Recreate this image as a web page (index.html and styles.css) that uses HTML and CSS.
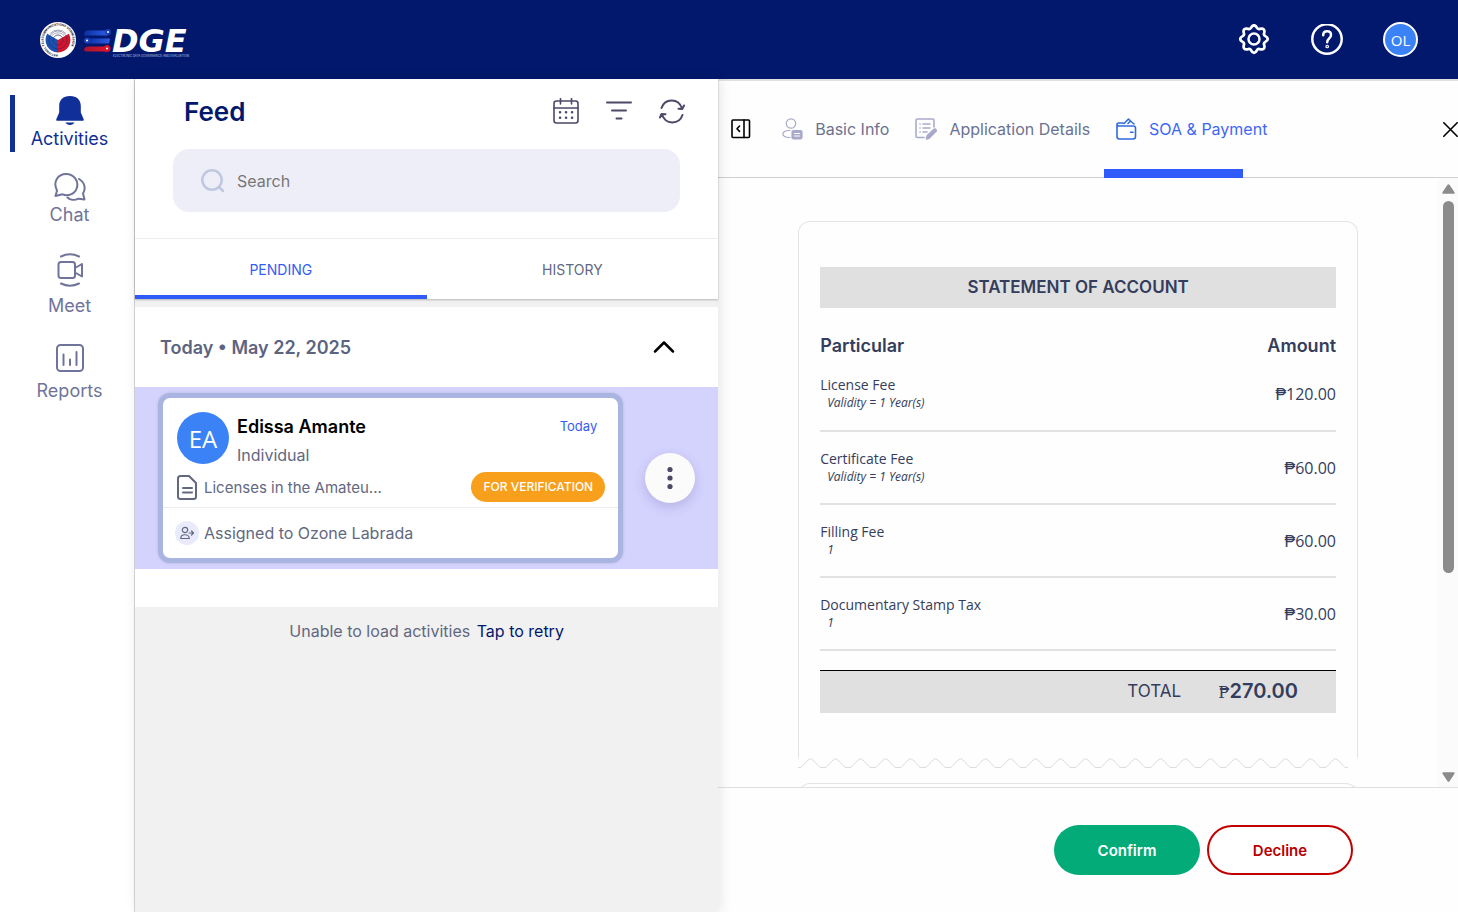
FILE: index.html
```html
<!DOCTYPE html>
<html lang="en">
<head>
<meta charset="utf-8">
<meta name="viewport" content="width=device-width, initial-scale=1">
<title>EDGE – Activities</title>
<link rel="stylesheet" href="styles.css">
</head>
<body>
<div class="app">
  <header class="topbar">
    <a class="brand" href="#" aria-label="EDGE home">
      <svg class="seal" viewBox="0 0 36 36" width="36" height="36" aria-hidden="true">
        <defs><path id="ring" d="M18 32.500a14.500 14.500 0 1 1 .1 0"/></defs>
        <circle cx="18" cy="18" r="18" fill="#fff"/>
        <path d="M18 18 7.200 11.800A12.500 12.500 0 0 0 18 30.500z" fill="#1c4fae"/>
        <path d="M18 18l10.800-6.200A12.500 12.500 0 0 1 18 30.500z" fill="#d5142c"/>
        <g fill="none" stroke="#555c78" stroke-width=".5"><path d="M14 15a5 5 0 0 1 8 0M12 13.500a8 8 0 0 1 12 0M10 11.500a11 11 0 0 1 16 0"/></g>
        <g fill="none" stroke="#14245e" stroke-width=".4"><circle cx="18" cy="18" r="5"/><circle cx="18" cy="18" r="9"/></g>
        <text class="seal-text"><textPath href="#ring">NATIONAL TELECOMMUNICATIONS COMMISSION</textPath></text>
      </svg>
      <svg class="wordmark" viewBox="0 0 118 36" width="118" height="36" aria-hidden="true">
        <defs>
          <linearGradient id="blue"><stop offset="0" stop-color="#0c2fa0"/><stop offset="1" stop-color="#2c5de5"/></linearGradient>
          <linearGradient id="red"><stop offset="0" stop-color="#a31435"/><stop offset="1" stop-color="#e0142b"/></linearGradient>
        </defs>
        <path d="M5 8.500h20v5H1q0-5 4-5z" fill="url(#blue)"/><circle cx="25" cy="10" r="3" fill="#1b3fb8"/>
        <path d="M4 16.500h23l-1 5H4z" fill="url(#blue)"/><circle cx="4" cy="18.500" r="3" fill="#1b3fb8"/>
        <path d="M4 24.500h20v5H4q-3 0-3-2t3-3z" fill="url(#red)"/><circle cx="24" cy="26.500" r="3.500" fill="#d5142c"/>
        <g fill="#fff"><circle cx="25" cy="10" r="1"/><circle cx="4" cy="18.500" r="1"/><circle cx="24" cy="26.500" r="1"/></g>
        <text class="word" x="29" y="30">DGE</text>
        <text class="tagline" x="30" y="35">ELECTRONIC DATA GOVERNANCE AND EVALUATION</text>
      </svg>
    </a>
    <div class="top-actions">
      <button class="plain" aria-label="Settings">
        <svg viewBox="0 0 32 32" width="32" height="32" class="line w25"><path d="M16 2.500c1.500 0 2 1 2.600 2.200.6 1.100 1.500 1.500 2.700 1.100 1.300-.4 2.600-.6 3.500.4s.8 2.200.4 3.500c-.4 1.200 0 2.100 1.100 2.700 1.200.6 2.200 1.100 2.200 2.600s-1 2-2.200 2.600c-1.100.6-1.500 1.500-1.100 2.700.4 1.300.6 2.600-.4 3.500s-2.200.8-3.500.4c-1.200-.4-2.100 0-2.700 1.100C18 26.500 17.500 27.500 16 27.500s-2-1-2.600-2.200c-.6-1.100-1.500-1.500-2.700-1.100-1.300.4-2.600.6-3.500-.4s-.8-2.200-.4-3.500c.4-1.200 0-2.100-1.100-2.700C4.500 17 3.500 16.500 3.500 15s1-2 2.200-2.600c1.100-.6 1.500-1.500 1.100-2.700-.4-1.300-.6-2.600.4-3.500s2.200-.8 3.500-.4c1.200.4 2.100 0 2.700-1.100C14 3.500 14.500 2.500 16 2.500z" transform="translate(-2.600 -1.500) scale(1.100)"/><circle cx="15" cy="15" r="5.500"/></svg>
      </button>
      <button class="plain" aria-label="Help">
        <svg viewBox="0 0 32 32" width="32" height="32" class="line w25"><circle cx="16" cy="15" r="14.700"/><path d="M12.200 11.300c0-2.500 1.700-4 3.900-4s3.900 1.400 3.900 3.700c0 3.400-3.800 3.400-3.800 7.300"/><circle cx="16.200" cy="22.500" r=".6"/></svg>
      </button>
      <button class="avatar small">OL</button>
    </div>
  </header>

  <nav class="sidebar" aria-label="Main">
    <a class="nav-item active" href="#">
      <svg viewBox="0 0 28 30" width="28" height="30"><path d="M14 1C7 1 3.200 5 3.200 11v6.500L.3 24.200C0 25 .4 25.800 1.300 25.800h25.400c.9 0 1.300-.8 1-1.600l-2.900-6.700V11C24.800 5 21 1 14 1zM9.500 27.500h9c-.8 1.600-2.400 2.500-4.500 2.500s-3.700-.9-4.500-2.500z" fill="currentColor"/></svg>
      <span>Activities</span>
    </a>
    <a class="nav-item" href="#">
      <svg viewBox="0 0 32 28" width="32" height="28" class="line w2"><path d="M1.500 23l1.500-5.500C-1.500 9 4 1 12 1s13 7 10.800 14c-2 6.500-9 8.500-14.300 6.300z"/><path d="M25 6c6 3.500 7 9.500 4 14.500l1.500 6-6-.8c-4 2-8.500 1.300-11-1.200"/></svg>
      <span>Chat</span>
    </a>
    <a class="nav-item spaced" href="#">
      <svg viewBox="0 0 26 34" width="26" height="34" class="line w2"><path d="M4 3.500q9-4.500 18 0M4 30.500q9 4.500 18 0"/><rect x="1.500" y="9" width="16.500" height="16" rx="2.500"/><path d="M18 15l7-4v12.500l-7-4z"/></svg>
      <span>Meet</span>
    </a>
    <a class="nav-item spaced" href="#">
      <svg viewBox="0 0 28 28" width="28" height="28" class="line w2"><rect x="1" y="1" width="26" height="26" rx="3.500"/><path d="M7.500 10.500v10.500M14 15.500v5.500M20.500 8v13"/></svg>
      <span>Reports</span>
    </a>
  </nav>

  <main class="feed">
    <section class="feed-head">
      <div class="title-row">
        <h1>Feed</h1>
        <div class="tools">
          <button class="plain" aria-label="Calendar"><svg viewBox="0 0 26 26" width="26" height="26" class="line w15"><rect x="1" y="3" width="24" height="22" rx="2.500"/><path d="M1 10h24M7.500 0v6M18.500 0v6"/><path d="M7 14.300h.1M13 14.300h.1M19 14.300h.1M7 19.800h.1M13 19.800h.1M19 19.800h.1" stroke-width="2.500"/></svg></button>
          <button class="plain" aria-label="Filter"><svg viewBox="0 0 26 26" width="26" height="26" class="line w2"><path d="M1 4.500h24M6 12.500h14M10.500 20.500h5"/></svg></button>
          <button class="plain" aria-label="Refresh"><svg viewBox="0 0 26 26" width="26" height="26" class="line w2"><path d="M2.500 10C6 0 19.500 0 23 10.500M19.500 10.700l3.700.3L25 7.500M23.500 17C20 27 6.500 27 3 16.500M1 19.500L2.500 16l4 .3"/></svg></button>
        </div>
      </div>
      <label class="search">
        <svg viewBox="0 0 24 24" width="24" height="24" class="line w25"><circle cx="11" cy="11" r="9.700"/><path d="M18 18l4 4"/></svg>
        <input type="search" placeholder="Search" aria-label="Search">
      </label>
      <div class="feed-tabs" role="tablist">
        <button role="tab" aria-selected="true">PENDING</button>
        <button role="tab" aria-selected="false">HISTORY</button>
      </div>
    </section>

    <section class="group">
      <button class="group-head" aria-expanded="true">
        <span>Today • May 22, 2025</span>
        <svg viewBox="0 0 22 14" width="22" height="14" class="line w25"><path d="M2 11.500l9-9 9 9"/></svg>
      </button>
      <div class="entry">
        <article class="card">
          <div class="card-main">
            <div class="person">
              <span class="avatar large">EA</span>
              <div class="who"><h2>Edissa Amante</h2><p>Individual</p></div>
              <time datetime="2025-05-22">Today</time>
            </div>
            <div class="doc">
              <svg viewBox="0 0 20 25" width="20" height="25" class="line w2"><path d="M3.500 1H12l7 7v13.500q0 2.500-2.500 2.500h-13Q1 24 1 21.500v-18Q1 1 3.500 1zM6 13h9M6 17.500h9"/></svg>
              <span class="doc-name">Licenses in the Amateu...</span>
              <span class="badge">FOR VERIFICATION</span>
            </div>
          </div>
          <div class="assigned">
            <span class="assign-icon"><svg viewBox="0 0 14 14" width="14" height="14" class="line w1"><circle cx="5" cy="4" r="2.700"/><path d="M.7 12.500c0-5 8.600-5 8.600 0zM9 7h4.500M11.500 5l2 2-2 2"/></svg></span>
            <span>Assigned to Ozone Labrada</span>
          </div>
        </article>
        <button class="more" aria-label="More actions"><svg viewBox="0 0 6 24" width="6" height="24" fill="#4d4768"><circle cx="3" cy="3.500" r="2.600"/><circle cx="3" cy="12" r="2.600"/><circle cx="3" cy="20.500" r="2.600"/></svg></button>
      </div>
    </section>
    <p class="retry">Unable to load activities <a href="#">Tap to retry</a></p>
  </main>

  <section class="detail">
    <header class="detail-head">
      <button class="plain collapse" aria-label="Collapse panel"><svg viewBox="0 0 20 20" width="20" height="20" class="line w15"><rect x="1" y="1" width="17.500" height="17.500" rx="1"/><path d="M13 1v17.500M8.500 7L6 9.700l2.500 2.700"/></svg></button>
      <div class="detail-tabs" role="tablist">
        <button role="tab" aria-selected="false"><svg viewBox="0 0 21 22" width="21" height="22" class="line w1 soft"><circle cx="9" cy="5.500" r="4.700"/><path d="M8 12.500c-9.500-.5-9.500 7.500 0 7"/><rect x="10" y="12.500" width="10" height="8.500" rx="1.500" fill="#a9aaca"/><path d="M12.500 15.500h5M12.500 18h5" stroke="#fff" stroke-width="1"/></svg>Basic Info</button>
        <button role="tab" aria-selected="false"><svg viewBox="0 0 22 22" width="22" height="22" class="line w15 soft"><path d="M9 19.500H2.500q-1.500 0-1.500-1.500V2.500Q1 1 2.500 1h15Q19 1 19 2.500V9M8 6h7M8 10h7M8 14h4M5 6h.1M5 10h.1M5 14h.1"/><path d="M11.500 21l.8-3.500 6.500-6q1.500-1 2.200.5.500.9-.5 1.800l-6.500 6.500z" fill="#a9aaca"/></svg>Application Details</button>
        <button role="tab" aria-selected="true"><svg viewBox="0 0 21 22" width="21" height="22" class="line w15 wallet"><path d="M7 5H3Q1 5 1 6.500v12Q1 21 3.500 21H17q2.500 0 2.500-2.500V10Q19.500 8 17 8H3Q1 8 1 6.500M8 5.500L12.500 1l2.500 2.500M12 5.500l2.500-2.500L18 6M14.500 14.300h2.500"/></svg>SOA &amp; Payment</button>
      </div>
      <button class="plain close" aria-label="Close"><svg viewBox="0 0 15 15" width="15" height="15" class="line w15"><path d="M.8.8l13.400 13.400M14.200.8L.8 14.200"/></svg></button>
    </header>

    <div class="viewport">
      <div class="scroll-area">
        <div class="receipt">
          <h2>STATEMENT OF ACCOUNT</h2>
          <table>
            <thead><tr><th scope="col">Particular</th><th scope="col">Amount</th></tr></thead>
            <tbody>
              <tr><td>License Fee<em>Validity = 1 Year(s)</em></td><td>₱120.00</td></tr>
              <tr><td>Certificate Fee<em>Validity = 1 Year(s)</em></td><td>₱60.00</td></tr>
              <tr><td>Filling Fee<em>1</em></td><td>₱60.00</td></tr>
              <tr><td>Documentary Stamp Tax<em>1</em></td><td>₱30.00</td></tr>
            </tbody>
          </table>
          <div class="total"><span>TOTAL</span><strong><span class="peso">₱</span>270.00</strong></div>
        </div>
        <svg class="tear" height="10" aria-hidden="true">
          <defs><pattern id="wave" width="25" height="10" patternUnits="userSpaceOnUse"><path d="M0 9.500h2q1 0 2-1l6-6.500q2.500-2.500 5 0l6 6.500q1 1 2 1h2" fill="none" stroke="#dcdcdf"/></pattern></defs>
          <rect width="100%" height="10" fill="url(#wave)"/>
        </svg>
        <div class="receipt next"></div>
      </div>
      <div class="scrollbar" aria-hidden="true">
        <svg viewBox="0 0 13 10" width="13" height="10"><path d="M5.500.8q1-1.200 2 0l5 7.500q.5 1.500-1 1.500h-10q-1.500 0-1-1.500z" fill="#8b8b8b"/></svg>
        <div class="track"><div class="thumb"></div></div>
        <svg viewBox="0 0 13 10" width="13" height="10"><path d="M5.500 9.200q1 1.200 2 0l5-7.500q.5-1.500-1-1.500h-10q-1.500 0-1 1.500z" fill="#8b8b8b"/></svg>
      </div>
    </div>

    <footer class="decision">
      <button class="confirm">Confirm</button>
      <button class="decline">Decline</button>
    </footer>
  </section>
</div>
</body>
</html>
```
FILE: styles.css
```css
* { box-sizing: border-box; }
body, h1, h2, p { margin: 0; }
body { font-family: Inter, "Open Sans", sans-serif; font-size: 16px; color: #626880; background: #fff; }
button, input { font: inherit; color: inherit; }
button { border: 0; background: none; padding: 0; cursor: pointer; }
a { color: inherit; text-decoration: none; }
svg { display: block; flex: none; }

.line { fill: none; stroke: currentColor; stroke-linecap: round; stroke-linejoin: round; }
.w1 { stroke-width: 1.2; }
.w15 { stroke-width: 1.6; }
.w2 { stroke-width: 2; }
.w25 { stroke-width: 2.5; }

.app {
  display: grid;
  grid-template: 79px minmax(0, 1fr) / 135px 40% minmax(0, 1fr);
  height: 100vh;
}

/* Top bar */
.topbar { grid-column: 1 / -1; display: flex; align-items: center; justify-content: space-between; padding: 0 40px; background: #02186c; color: #fff; }
.brand { display: flex; align-items: center; gap: 7px; }
.seal-text { font-size: 3px; font-weight: 700; fill: #14142c; }
.word { font: italic 700 32px "DejaVu Sans", sans-serif; fill: #fff; }
.tagline { font-size: 3px; fill: #b9c2e4; }
.top-actions { display: flex; align-items: center; gap: 40px; }
.avatar { display: grid; place-items: center; flex: none; border-radius: 50%; background: #3b82f6; color: #fff; font-family: "Open Sans", sans-serif; }
.avatar.small { width: 35px; height: 35px; border: 2px solid #fff; font-size: 15px; }
.avatar.large { width: 52px; height: 52px; font-size: 24px; }

/* Sidebar */
.sidebar { display: flex; flex-direction: column; gap: 21px; padding-top: 16px; border-right: 1px solid #d6d6da; color: #70749a; }
.nav-item { position: relative; display: flex; flex-direction: column; align-items: center; padding-left: 5px; gap: 1px; font-size: 18px; line-height: 26px; }
.nav-item.spaced { gap: 6px; margin-top: 4px; }
.nav-item.active { color: #112f98; }
.nav-item.active::before { content: ""; position: absolute; left: 10px; top: 0; bottom: 0; width: 5px; background: #112f98; }

/* Feed */
.feed { position: relative; z-index: 1; display: flex; flex-direction: column; background: #f1f1f1; box-shadow: 2px 0 12px rgba(0, 0, 0, .1); }
.feed-head { margin-bottom: 8px; background: #fff; box-shadow: 0 1px 2px rgba(0, 0, 0, .25); }
.title-row { display: flex; align-items: center; justify-content: space-between; height: 70px; padding: 0 33px 6px 49px; }
h1 { color: #02186c; font-size: 26px; font-weight: 600; }
.tools { display: flex; gap: 27px; color: #4d4768; }
.search { display: flex; align-items: center; gap: 12px; height: 63px; margin: 0 38px 26px; padding: 0 28px; border-radius: 16px; background: #eeeef8; }
.search svg { color: #bfc8de; }
.search input { flex: 1; min-width: 0; border: 0; outline: 0; padding: 0; background: none; }
.search input::placeholder { color: #777; opacity: 1; }
.feed-tabs { display: grid; grid-template-columns: 1fr 1fr; height: 61px; border-top: 1px solid #ececee; font-size: 14px; }
.feed-tabs button { border-top: 4px solid transparent; border-bottom: 4px solid transparent; }
.feed-tabs [aria-selected="true"] { color: #345df5; border-bottom-color: #2f5bfb; }

.group { padding-bottom: 38px; background: #fff; }
.group-head { display: flex; align-items: center; justify-content: space-between; width: 100%; height: 80px; padding: 0 43px 0 25px; font-size: 18px; font-weight: 600; color: #5c6480; }
.group-head svg { color: #000; }
.entry { display: flex; align-items: center; gap: 22px; padding: 6px 23px; background: #d4d3fe; }
.card { flex: 1; min-width: 0; border: 5px solid #aab4e0; border-radius: 12px; background: #fff; box-shadow: 0 0 3px rgba(0, 0, 0, .15); }
.card-main { padding: 14px 13px 5px 14px; border-bottom: 1px solid #ececee; }
.person { display: flex; gap: 8px; margin-bottom: 4px; }
.who { flex: 1; padding-top: 1px; line-height: 28px; }
.who h2 { color: #000; font-size: 18px; font-weight: 600; }
time { padding-right: 8px; color: #345df5; font-size: 13px; line-height: 28px; }
.person, .doc { height: 56px; }
.person { margin: 0 0 4px; }
.doc { display: flex; align-items: center; gap: 7px; height: 30px; }
.doc-name { flex: 1; font-size: 15px; }
.badge { padding: 0 12px; border-radius: 15px; background: #f89f1b; color: #fff; font-size: 12px; font-weight: 500; line-height: 30px; }
.assigned { display: flex; align-items: center; gap: 5px; height: 50px; padding-left: 12px; }
.assign-icon { display: grid; place-items: center; width: 24px; height: 24px; border-radius: 50%; background: #e9ebfd; }
.more { display: grid; place-items: center; flex: none; width: 50px; height: 50px; border-radius: 50%; background: #fbfbfb; box-shadow: 0 4px 12px rgba(60, 50, 120, .2); }
.retry { padding: 12px 20px; text-align: center; line-height: 24px; }
.retry a { margin-left: 2px; color: #02186c; }

/* Detail panel */
.detail { display: flex; flex-direction: column; min-width: 0; border-top: 2px solid #e0e0e0; background: #fefefe; }
.detail-head { display: flex; align-items: center; height: 97px; flex: none; padding-left: 13px; border-bottom: 1px solid #d0d0d4; }
.collapse, .close { color: #000; }
.detail-tabs { display: flex; flex: 1; align-self: stretch; gap: 26px; padding-left: 31px; }
.detail-tabs button { position: relative; display: flex; align-items: center; gap: 12px; color: #6b7290; white-space: nowrap; }
.detail-tabs .soft { color: #a9aaca; }
.detail-tabs [aria-selected="true"] { color: #3f67f5; }
.detail-tabs [aria-selected="true"]::after { content: ""; position: absolute; left: -12px; right: 24px; bottom: -1px; height: 9px; background: #2f5bfb; }
.wallet { color: #2f6bdd; }

.viewport { display: flex; flex: 1; min-height: 0; }
.scroll-area { flex: 1; overflow-y: auto; scrollbar-width: none; padding: 43px 80px 0; }
.receipt { padding: 45px 21px; border: 1px solid #e4e4e6; border-bottom: 0; border-radius: 12px 12px 0 0; color: #343d5c; }
.receipt h2 { background: #e0e0e0; font-size: 17px; font-weight: 600; line-height: 41px; text-align: center; }
table { width: 100%; margin-top: 25px; border-collapse: collapse; font-family: "Open Sans", sans-serif; }
th { padding: 0; height: 25px; font-family: Inter, sans-serif; font-size: 18px; font-weight: 600; text-align: left; }
td { padding: 0; height: 73px; border-bottom: 2px solid #e2e2e4; font-size: 14px; line-height: 18px; }
th:last-child, td:last-child { text-align: right; }
td:last-child { font-size: 16px; }
em { display: block; padding-left: 7px; font-size: 12px; }
.total { display: flex; align-items: center; justify-content: flex-end; gap: 37px; height: 43px; margin-top: 19px; padding: 0 38px 2px 0; border-top: 1px solid #000; background: #e0e0e0; font-size: 17px; }
.total strong { font-size: 20px; font-weight: 600; }
.peso { font-family: "DejaVu Serif", serif; font-size: 16px; font-weight: 400; }
.tear { width: 550px; max-width: 100%; }
.receipt.next { margin-top: 15px; }
.scrollbar { display: flex; flex-direction: column; align-items: center; gap: 7px; width: 20px; padding: 6px 0 5px; background: #fbfbfb; }
.track { flex: 1; }
.thumb { width: 11px; height: 66%; border-radius: 6px; background: #8b8b8b; }

.decision { display: flex; justify-content: flex-end; gap: 7px; padding: 37px 105px 37px 20px; border-top: 1px solid #e0e0e2; }
.decision button { width: 146px; height: 50px; border-radius: 25px; font-size: 15px; font-weight: 600; }
.confirm { background: #02ab78; color: #fff; }
.decline { border: 2px solid #c00000; background: #fff; color: #b80000; }
```
